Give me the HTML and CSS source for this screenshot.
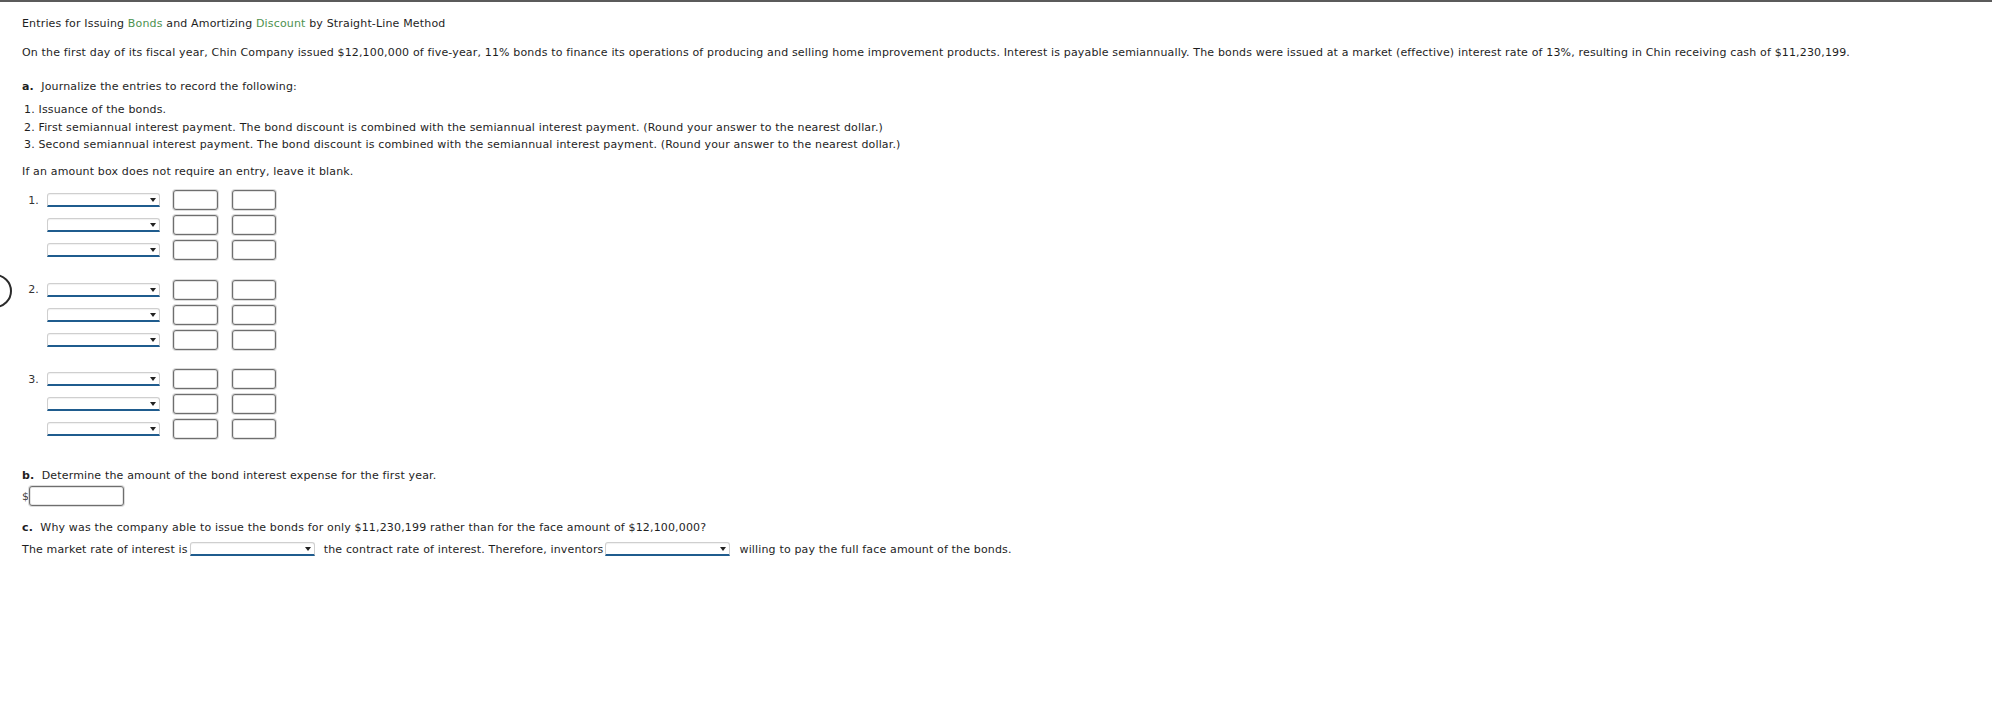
FILE: index.html
```html
<!DOCTYPE html>
<html>
<head>
<meta charset="utf-8">
<link rel="stylesheet" href="styles.css">
</head>
<body>
<div class="topbar"></div>
<div class="marker"></div>
<div class="page">
  <p class="title">Entries for Issuing <span class="term">Bonds</span> and Amortizing <span class="term">Discount</span> by Straight-Line Method</p>
  <p class="para">On the first day of its fiscal year, Chin Company issued $12,100,000 of five-year, 11% bonds to finance its operations of producing and selling home improvement products. Interest is payable semiannually. The bonds were issued at a market (effective) interest rate of 13%, resulting in Chin receiving cash of $11,230,199.</p>
  <p class="part part-a"><b>a.</b>&nbsp; Journalize the entries to record the following:</p>
  <ol class="steps">
    <li>1. Issuance of the bonds.</li>
    <li>2. First semiannual interest payment. The bond discount is combined with the semiannual interest payment. (Round your answer to the nearest dollar.)</li>
    <li>3. Second semiannual interest payment. The bond discount is combined with the semiannual interest payment. (Round your answer to the nearest dollar.)</li>
  </ol>
  <p class="note">If an amount box does not require an entry, leave it blank.</p>

  <div class="journal">
    <div class="entry">
      <div class="row"><span class="num">1.</span><span class="select"><span class="arrow"></span></span><span class="box"></span><span class="box box2"></span></div>
      <div class="row"><span class="num"></span><span class="select"><span class="arrow"></span></span><span class="box"></span><span class="box box2"></span></div>
      <div class="row"><span class="num"></span><span class="select"><span class="arrow"></span></span><span class="box"></span><span class="box box2"></span></div>
    </div>
    <div class="entry">
      <div class="row"><span class="num">2.</span><span class="select"><span class="arrow"></span></span><span class="box"></span><span class="box box2"></span></div>
      <div class="row"><span class="num"></span><span class="select"><span class="arrow"></span></span><span class="box"></span><span class="box box2"></span></div>
      <div class="row"><span class="num"></span><span class="select"><span class="arrow"></span></span><span class="box"></span><span class="box box2"></span></div>
    </div>
    <div class="entry">
      <div class="row"><span class="num">3.</span><span class="select"><span class="arrow"></span></span><span class="box"></span><span class="box box2"></span></div>
      <div class="row"><span class="num"></span><span class="select"><span class="arrow"></span></span><span class="box"></span><span class="box box2"></span></div>
      <div class="row"><span class="num"></span><span class="select"><span class="arrow"></span></span><span class="box"></span><span class="box box2"></span></div>
    </div>
  </div>

  <p class="part part-b"><b>b.</b>&nbsp; Determine the amount of the bond interest expense for the first year.</p>
  <div class="amount"><span class="dollar">$</span><span class="box wide"></span></div>

  <p class="part part-c"><b>c.</b>&nbsp; Why was the company able to issue the bonds for only $11,230,199 rather than for the face amount of $12,100,000?</p>
  <div class="answer"><span>The market rate of interest is</span><span class="select inline"><span class="arrow"></span></span><span>the contract rate of interest. Therefore, inventors</span><span class="select inline"><span class="arrow"></span></span><span>willing to pay the full face amount of the bonds.</span></div>
</div>
</body>
</html>
```

FILE: styles.css
```css
html, body {
  margin: 0;
  padding: 0;
  background: #ffffff;
}
body {
  font-family: "DejaVu Sans", Verdana, sans-serif;
  font-size: 11px;
  letter-spacing: 0.16px;
  color: #1e1e1e;
  position: relative;
  min-height: 707px;
}
.topbar {
  height: 2px;
  background: #5b5b5b;
}
.marker {
  position: absolute;
  left: -22px;
  top: 274px;
  width: 30px;
  height: 30px;
  border: 2px solid #2b2b2b;
  border-radius: 50%;
}
.page {
  padding: 13px 22px 0 22px;
}
p {
  margin: 0;
  line-height: 17px;
}
.term {
  color: #4d914f;
}
.para {
  margin-top: 12px;
}
.part b {
  font-weight: bold;
}
.part-a {
  margin-top: 17px;
}
.steps {
  list-style: none;
  margin: 6px 0 0 0;
  padding: 0 0 0 2px;
}
.steps li {
  line-height: 17.5px;
}
.note {
  margin-top: 9px;
}
.journal {
  margin-top: 8px;
  display: flex;
  flex-direction: column;
  gap: 14.5px;
}
.entry {
  display: flex;
  flex-direction: column;
}
.row {
  height: 25px;
  display: flex;
  align-items: center;
}
.num {
  width: 17px;
  text-align: right;
  margin-right: 8px;
  color: #333;
}
.select {
  box-sizing: border-box;
  width: 113px;
  height: 14px;
  border: 1px solid #cfcfcf;
  border-bottom: 2px solid #1f5c8e;
  border-radius: 3px 3px 0 0;
  background: #ffffff;
  display: flex;
  align-items: center;
  justify-content: flex-end;
  padding-right: 3px;
  box-shadow: inset 0 1px 1px rgba(0,0,0,0.06);
  flex: none;
}
.arrow {
  width: 0;
  height: 0;
  border-left: 3px solid transparent;
  border-right: 3px solid transparent;
  border-top: 4px solid #222;
  margin-top: 1px;
}
.box {
  box-sizing: border-box;
  width: 45px;
  height: 20px;
  margin-left: 13px;
  border: 1px solid #6e6e6e;
  border-radius: 3px;
  background: #fff;
  box-shadow: 0 0 0 1px #dcdcdc, inset 0 0 0 1px #e4e4e4;
  flex: none;
}
.box2 {
  margin-left: 14px;
  width: 44px;
}
.part-b {
  margin-top: 25px;
}
.amount {
  display: flex;
  align-items: center;
  margin-top: 2px;
  height: 21px;
}
.dollar {
  width: 7px;
  color: #444;
}
.box.wide {
  width: 95px;
  margin-left: 0;
}
.part-c {
  margin-top: 12px;
}
.answer {
  margin-top: 5px;
  display: flex;
  align-items: center;
  height: 17px;
  white-space: nowrap;
}
.select.inline {
  width: 125px;
  height: 14px;
  margin: 0 9px 0 2px;
}
```
